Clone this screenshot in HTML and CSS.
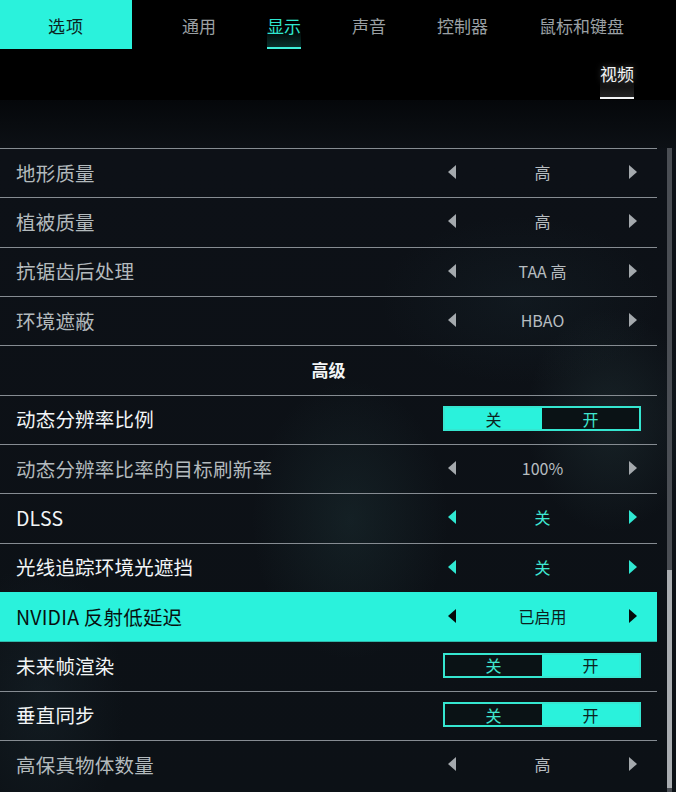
FILE: index.html
```html
<!DOCTYPE html>
<html lang="zh-CN">
<head>
<meta charset="utf-8">
<title>选项 - 显示</title>
<link rel="stylesheet" href="styles.css">
</head>
<body>
<div class="screen">
  <header class="topbar">
    <div class="brand">选项</div>
    <nav class="tabs">
      <div class="tab">通用</div>
      <div class="tab active">显示</div>
      <div class="tab">声音</div>
      <div class="tab">控制器</div>
      <div class="tab">鼠标和键盘</div>
    </nav>
  </header>
  <div class="subbar">
    <div class="subtab">视频</div>
  </div>
  <div class="spacer"></div>
  <main class="content">
    <section class="list">
      <div class="row dim">
        <span class="label">地形质量</span>
        <div class="stepper"><svg class="arrow" viewBox="0 0 8 14"><polygon points="8,0 8,14 0,7"/></svg><span class="value">高</span><svg class="arrow" viewBox="0 0 8 14"><polygon points="0,0 0,14 8,7"/></svg></div>
      </div>
      <div class="row dim">
        <span class="label">植被质量</span>
        <div class="stepper"><svg class="arrow" viewBox="0 0 8 14"><polygon points="8,0 8,14 0,7"/></svg><span class="value">高</span><svg class="arrow" viewBox="0 0 8 14"><polygon points="0,0 0,14 8,7"/></svg></div>
      </div>
      <div class="row dim">
        <span class="label">抗锯齿后处理</span>
        <div class="stepper"><svg class="arrow" viewBox="0 0 8 14"><polygon points="8,0 8,14 0,7"/></svg><span class="value">TAA 高</span><svg class="arrow" viewBox="0 0 8 14"><polygon points="0,0 0,14 8,7"/></svg></div>
      </div>
      <div class="row dim">
        <span class="label">环境遮蔽</span>
        <div class="stepper"><svg class="arrow" viewBox="0 0 8 14"><polygon points="8,0 8,14 0,7"/></svg><span class="value">HBAO</span><svg class="arrow" viewBox="0 0 8 14"><polygon points="0,0 0,14 8,7"/></svg></div>
      </div>
      <div class="row section">
        <span class="section-title">高级</span>
      </div>
      <div class="row">
        <span class="label">动态分辨率比例</span>
        <div class="toggle"><span class="opt on">关</span><span class="opt">开</span></div>
      </div>
      <div class="row dim">
        <span class="label">动态分辨率比率的目标刷新率</span>
        <div class="stepper"><svg class="arrow" viewBox="0 0 8 14"><polygon points="8,0 8,14 0,7"/></svg><span class="value">100%</span><svg class="arrow" viewBox="0 0 8 14"><polygon points="0,0 0,14 8,7"/></svg></div>
      </div>
      <div class="row accent">
        <span class="label">DLSS</span>
        <div class="stepper"><svg class="arrow" viewBox="0 0 8 14"><polygon points="8,0 8,14 0,7"/></svg><span class="value">关</span><svg class="arrow" viewBox="0 0 8 14"><polygon points="0,0 0,14 8,7"/></svg></div>
      </div>
      <div class="row accent">
        <span class="label">光线追踪环境光遮挡</span>
        <div class="stepper"><svg class="arrow" viewBox="0 0 8 14"><polygon points="8,0 8,14 0,7"/></svg><span class="value">关</span><svg class="arrow" viewBox="0 0 8 14"><polygon points="0,0 0,14 8,7"/></svg></div>
      </div>
      <div class="row hl">
        <span class="label">NVIDIA 反射低延迟</span>
        <div class="stepper"><svg class="arrow" viewBox="0 0 8 14"><polygon points="8,0 8,14 0,7"/></svg><span class="value">已启用</span><svg class="arrow" viewBox="0 0 8 14"><polygon points="0,0 0,14 8,7"/></svg></div>
      </div>
      <div class="row">
        <span class="label">未来帧渲染</span>
        <div class="toggle"><span class="opt">关</span><span class="opt on">开</span></div>
      </div>
      <div class="row">
        <span class="label">垂直同步</span>
        <div class="toggle"><span class="opt">关</span><span class="opt on">开</span></div>
      </div>
      <div class="row dim">
        <span class="label">高保真物体数量</span>
        <div class="stepper"><svg class="arrow" viewBox="0 0 8 14"><polygon points="8,0 8,14 0,7"/></svg><span class="value">高</span><svg class="arrow" viewBox="0 0 8 14"><polygon points="0,0 0,14 8,7"/></svg></div>
      </div>
    </section>
    <div class="scrollbar">
      <div class="thumb"></div>
    </div>
  </main>
</div>
</body>
</html>
```

FILE: styles.css
```css
* { box-sizing: border-box; }

html, body {
  margin: 0;
  padding: 0;
  width: 676px;
  height: 792px;
  overflow: hidden;
  background: #0b0f14;
}

body {
  font-family: "Noto Sans CJK SC", "Noto Sans", sans-serif;
  color: #e6ebed;
}

.screen {
  width: 676px;
  height: 792px;
  display: flex;
  flex-direction: column;
  background:
    radial-gradient(ellipse 140px 200px at 350px 520px, rgba(60, 110, 110, 0.16), transparent 70%),
    radial-gradient(ellipse 120px 160px at 610px 420px, rgba(70, 110, 110, 0.18), transparent 70%),
    radial-gradient(ellipse 200px 120px at 520px 300px, rgba(40, 70, 80, 0.14), transparent 70%),
    radial-gradient(ellipse 120px 200px at 40px 700px, rgba(50, 80, 90, 0.16), transparent 70%),
    linear-gradient(180deg, #000 0, #000 100px, #0d1117 150px, #0c1116 100%);
}

/* top bar */
.topbar {
  height: 49px;
  display: flex;
  align-items: stretch;
  background: #000;
  overflow: hidden;
  white-space: nowrap;
}

.brand {
  width: 132px;
  flex: none;
  background: #2af2dc;
  color: #0c2422;
  font-size: 17px;
  display: flex;
  align-items: center;
  justify-content: center;
  padding-top: 2px;
  letter-spacing: 1px;
}

.tabs {
  display: flex;
  gap: 51px;
  margin-left: 50px;
}

.tab {
  flex: none;
  font-size: 17px;
  color: #9ba0a4;
  display: flex;
  align-items: center;
  padding-top: 3px;
  border-bottom: 2px solid transparent;
}

.tab.active {
  color: #2fe6d0;
  border-bottom-color: #3ff0da;
  background: linear-gradient(180deg, transparent 60%, rgba(40, 220, 200, 0.22) 100%);
}

/* sub bar */
.subbar {
  height: 51px;
  display: flex;
  justify-content: flex-end;
  padding-right: 42px;
  background: #000;
}

.subtab {
  height: 50px;
  font-size: 17px;
  color: #f2f4f5;
  display: flex;
  align-items: center;
  border-bottom: 2px solid #f4f6f7;
  background: linear-gradient(180deg, transparent 55%, rgba(255, 255, 255, 0.14) 100%);
  text-shadow: 0 0 6px rgba(255, 255, 255, 0.35);
}

.spacer {
  height: 48px;
  background: linear-gradient(180deg, #05070a 0, #0c1015 100%);
}

/* content */
.content {
  flex: 1;
  display: flex;
  gap: 10px;
}

.list {
  width: 657px;
  flex: none;
  display: flex;
  flex-direction: column;
}

.row {
  height: 49.33px;
  flex: none;
  border-top: 1px solid #868c92;
  display: flex;
  align-items: center;
  padding: 0 16px 2px 16px;
}

.label {
  font-size: 19.5px;
  color: #f2f5f6;
  white-space: nowrap;
  letter-spacing: 0.2px;
}

.row.dim .label { color: #b3babd; }

.stepper {
  margin-left: auto;
  width: 198px;
  display: flex;
  align-items: center;
  justify-content: space-between;
  padding: 0 4px 0 5px;
}

.arrow {
  width: 8px;
  height: 14px;
  fill: #a4a9ad;
  flex: none;
}

.value {
  font-size: 16px;
  color: #b7bdc0;
}

.row.accent .arrow { fill: #2fe8d2; }
.row.accent .value { color: #3fe8d2; }

.row.hl {
  background: #2af2dc;
  border-top-color: #2af2dc;
}

.row.hl + .row { border-top-color: #2fb8aa; }

.row.hl .label { color: #07100f; }
.row.hl .arrow { fill: #050a0a; }
.row.hl .value { color: #0d1f1d; }

.row.section { justify-content: center; }

.section-title {
  font-size: 17px;
  font-weight: 700;
  color: #f2f4f5;
}

.toggle {
  margin-left: auto;
  width: 198px;
  height: 25px;
  border: 2px solid #35e6d0;
  display: flex;
}

.opt {
  flex: 1;
  display: flex;
  align-items: center;
  justify-content: center;
  font-size: 16px;
  color: #3fe6cf;
  background: #0a1215;
}

.opt.on {
  background: #2af2dc;
  color: #0d2220;
}

/* scrollbar */
.scrollbar {
  width: 5px;
  flex: none;
  background: #4a4e54;
  display: flex;
  flex-direction: column;
  justify-content: flex-end;
  padding-bottom: 4px;
}

.thumb {
  height: 218px;
  background: #a9adb1;
}
```
